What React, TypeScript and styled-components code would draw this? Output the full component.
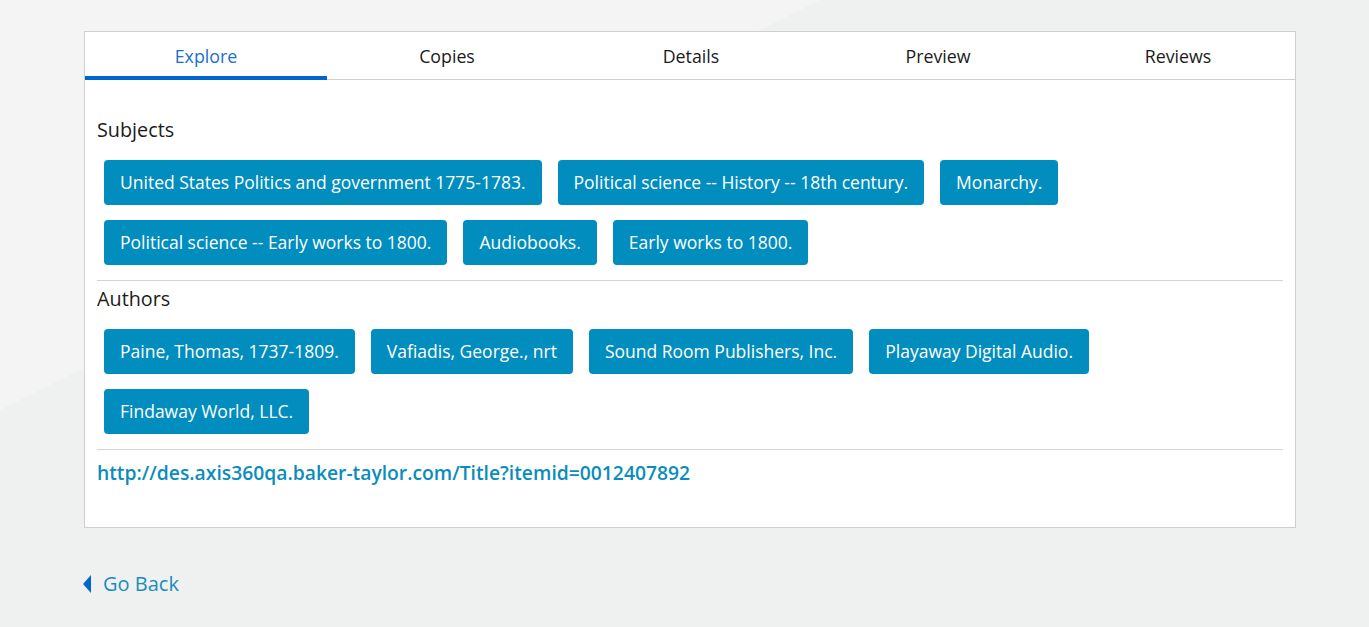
import React from "react";
import styled, { createGlobalStyle } from "styled-components";

const Global = createGlobalStyle`
  html, body {
    margin: 0;
    padding: 0;
  }
  body {
    background-color: #eff0f0;
    background-image: linear-gradient(to bottom right, #f4f4f4 50%, rgba(244,244,244,0) 50%);
    background-size: 820px 410px;
    background-repeat: no-repeat;
    font-family: "Open Sans", "Noto Sans", sans-serif;
    min-height: 627px;
  }
`;

const Page = styled.div`
  padding: 31px 73px 0 84px;
  display: flex;
  flex-direction: column;
`;

const Card = styled.section`
  background: #fff;
  border: 1px solid #cfcfcf;
  width: 1212px;
  box-sizing: border-box;
  padding-bottom: 37px;
`;

const TabBar = styled.nav`
  display: grid;
  grid-template-columns: 242px 240px 248px 246px 1fr;
  border-bottom: 1px solid #cfcfcf;
`;

const Tab = styled.div<{ $active?: boolean }>`
  display: flex;
  align-items: center;
  justify-content: center;
  font-size: 17.8px;
  color: ${(p) => (p.$active ? "#1a6fd0" : "#1b1b1b")};
  box-shadow: ${(p) => (p.$active ? "inset 0 -4px 0 #0066cc" : "none")};
  margin-bottom: -1px;
  padding-bottom: 1px;
  box-sizing: border-box;
  height: 48px;
`;

const Body = styled.div`
  padding: 37px 12px 0 12px;
`;

const Section = styled.div`
  padding-bottom: 7px;
  border-bottom: 1px solid #d3d3d3;
  margin-bottom: 5px;
`;

const Heading = styled.h3`
  margin: 0 0 17px 0;
  font-size: 19.8px;
  font-weight: 400;
  color: #1b1b1b;
  line-height: 26px;
`;

const Chips = styled.div`
  display: flex;
  flex-wrap: wrap;
  gap: 15px 16px;
  padding: 0 7px;
  margin-bottom: 8px;
`;

const Chip = styled.a`
  display: inline-flex;
  align-items: center;
  height: 45px;
  padding: 0 16px 1px;
  box-sizing: border-box;
  background: #018dbd;
  color: #fff;
  font-size: 17.5px;
  border-radius: 4px;
  text-decoration: none;
  white-space: nowrap;
`;

const Link = styled.a`
  display: block;
  font-size: 19.3px;
  font-weight: 600;
  color: #0a8cbc;
  text-decoration: none;
  line-height: 34px;
  margin-top: 6px;
`;

const Back = styled.a`
  margin-top: 42px;
  display: flex;
  align-items: center;
  gap: 12px;
  margin-left: -1px;
  font-size: 20px;
  color: #1a8bc0;
  text-decoration: none;
`;

const Arrow = styled.span`
  width: 0;
  height: 0;
  border-top: 9px solid transparent;
  border-bottom: 9px solid transparent;
  border-right: 8px solid #0066cc;
`;

const subjects = [
  "United States Politics and government 1775-1783.",
  "Political science -- History -- 18th century.",
  "Monarchy.",
  "Political science -- Early works to 1800.",
  "Audiobooks.",
  "Early works to 1800.",
];

const authors = [
  "Paine, Thomas, 1737-1809.",
  "Vafiadis, George., nrt",
  "Sound Room Publishers, Inc.",
  "Playaway Digital Audio.",
  "Findaway World, LLC.",
];

const tabs = ["Explore", "Copies", "Details", "Preview", "Reviews"];

export default function App() {
  return (
    <>
      <Global />
      <Page>
        <Card>
          <TabBar>
            {tabs.map((t, i) => (
              <Tab key={t} $active={i === 0}>
                {t}
              </Tab>
            ))}
          </TabBar>
          <Body>
            <Section>
              <Heading>Subjects</Heading>
              <Chips>
                {subjects.map((s) => (
                  <Chip key={s}>{s}</Chip>
                ))}
              </Chips>
            </Section>
            <Section>
              <Heading>Authors</Heading>
              <Chips>
                {authors.map((s) => (
                  <Chip key={s}>{s}</Chip>
                ))}
              </Chips>
            </Section>
            <Link>http://des.axis360qa.baker-taylor.com/Title?itemid=0012407892</Link>
          </Body>
        </Card>
        <Back>
          <Arrow />
          Go Back
        </Back>
      </Page>
    </>
  );
}
